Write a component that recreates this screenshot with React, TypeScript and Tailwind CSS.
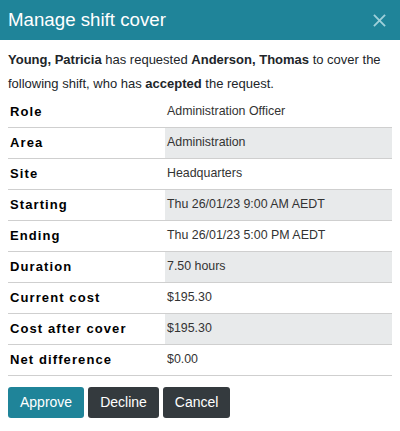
const rows: { label: string; value: string }[] = [
  { label: "Role", value: "Administration Officer" },
  { label: "Area", value: "Administration" },
  { label: "Site", value: "Headquarters" },
  { label: "Starting", value: "Thu 26/01/23 9:00 AM AEDT" },
  { label: "Ending", value: "Thu 26/01/23 5:00 PM AEDT" },
  { label: "Duration", value: "7.50 hours" },
  { label: "Current cost", value: "$195.30" },
  { label: "Cost after cover", value: "$195.30" },
  { label: "Net difference", value: "$0.00" },
];

export default function App() {
  return (
    <div className="w-[400px] h-[431px] bg-white font-['Liberation_Sans',Arial,sans-serif] text-[#212529]">
      {/* Header */}
      <div className="h-[40px] bg-[#1f8499] flex items-center justify-between pl-2 pr-[14px]">
        <h1 className="text-white text-[18.7px] leading-none">Manage shift cover</h1>
        <button className="text-[#9fd0da]">
          <svg width="13" height="13" viewBox="0 0 14 14" fill="none" stroke="currentColor" strokeWidth="2">
            <path d="M1 1 L13 13 M13 1 L1 13" />
          </svg>
        </button>
      </div>

      <div className="px-2 pt-[8px]">
        <p className="text-[13px] leading-[24px]">
          <b>Young, Patricia</b> has requested <b>Anderson, Thomas</b> to cover the following shift, who has{" "}
          <b>accepted</b> the request.
        </p>

        <table className="w-full border-collapse">
          <tbody>
            {rows.map((r, i) => (
              <tr key={r.label} className="border-b border-[#cfcfcf] h-[31px]">
                <td className="w-[157px] pl-[2px] text-[13px] font-bold tracking-[1.1px] text-black">{r.label}</td>
                <td className={`pl-[2px] text-[12.4px] text-[#333] ${i % 2 === 1 ? "bg-[#e8eaeb]" : ""}`}>
                  {r.value}
                </td>
              </tr>
            ))}
          </tbody>
        </table>

        <div className="flex gap-[4px] mt-[11px]">
          <button className="h-[31px] px-3 rounded-[3px] bg-[#1f8499] text-white text-[14px]">Approve</button>
          <button className="h-[31px] px-3 rounded-[3px] bg-[#343a3e] text-white text-[14px]">Decline</button>
          <button className="h-[31px] px-3 rounded-[3px] bg-[#343a3e] text-white text-[14px]">Cancel</button>
        </div>
      </div>
    </div>
  );
}
